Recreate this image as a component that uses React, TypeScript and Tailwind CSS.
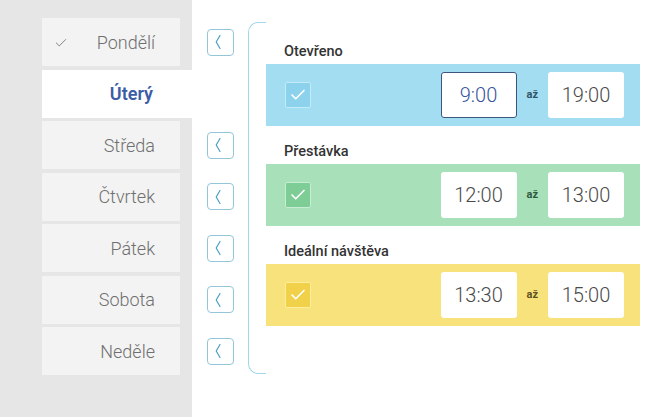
import { Check } from "lucide-react";

const days = [
  { name: "Pondělí", done: true },
  { name: "Úterý", active: true },
  { name: "Středa" },
  { name: "Čtvrtek" },
  { name: "Pátek" },
  { name: "Sobota" },
  { name: "Neděle" },
];

const sections = [
  {
    label: "Otevřeno",
    band: "bg-[#a3ddf1]",
    box: "bg-[#8dd2ec] border-[#c4ecf8]",
    az: "text-[#2f5566]",
    from: "9:00",
    to: "19:00",
    focused: true,
  },
  {
    label: "Přestávka",
    band: "bg-[#a7e0b9]",
    box: "bg-[#7ecc96] border-[#c6eed2]",
    az: "text-[#2f5a3d]",
    from: "12:00",
    to: "13:00",
  },
  {
    label: "Ideální návštěva",
    band: "bg-[#f7e27c]",
    box: "bg-[#f1d04a] border-[#fbee9f]",
    az: "text-[#5e5222]",
    from: "13:30",
    to: "15:00",
  },
];

function Chevron() {
  return (
    <svg width="8" height="16" viewBox="0 0 8 16" className="-ml-[5px]">
      <path d="M6 1.5 L2.2 8 L6 14.5" fill="none" stroke="#4a9fc2" strokeWidth="1.2" strokeLinecap="round" strokeLinejoin="round" />
    </svg>
  );
}

function TimeBox({ value, focused }: { value: string; focused?: boolean }) {
  return (
    <div
      className={
        "w-[76px] h-[46px] bg-white rounded-[3px] flex items-center justify-center text-[20px] font-light " +
        (focused ? "border border-[#3d5680] text-[#34549c]" : "text-[#4a4a4a]")
      }
    >
      {value}
    </div>
  );
}

export default function App() {
  return (
    <div
      className="w-[666px] h-[417px] flex bg-white overflow-hidden"
      style={{ fontFamily: "Roboto, 'Noto Sans', sans-serif" }}
    >
      {/* Day tabs */}
      <div className="w-[192px] shrink-0 bg-[#e6e6e6] pt-[18px] flex flex-col gap-[3.5px]">
        {days.map((d) =>
          d.active ? (
            <div
              key={d.name}
              className="h-[48px] ml-[42px] w-[150px] bg-white flex items-center justify-end pr-[39px] text-[18px] font-semibold text-[#3d5ca6]"
            >
              {d.name}
            </div>
          ) : (
            <div
              key={d.name}
              className="h-[48px] ml-[42px] w-[138px] bg-[#f3f3f3] flex items-center justify-end pr-[25px] relative text-[18px] font-light text-[#6f6f6f]"
            >
              {d.done && (
                <Check className="absolute left-[12px] top-[18px] text-[#7a7a7a]" size={14} strokeWidth={1.6} />
              )}
              {d.name}
            </div>
          )
        )}
      </div>

      {/* Copy buttons */}
      <div className="w-[56px] shrink-0 pt-[18px] pl-[15px] flex flex-col gap-[3.5px]">
        {days.map((d) => (
          <div key={d.name} className="h-[48px] flex items-center">
            {!d.active && (
              <div className="w-[27px] h-[27px] rounded-[4px] border-[1.5px] border-[#93c6d8] flex items-center justify-center">
                <Chevron />
              </div>
            )}
          </div>
        ))}
      </div>

      {/* Hours panel */}
      <div className="mt-[22px] h-[352px] flex">
        <div className="w-[18px] border-l-[1.5px] border-y-[1.5px] border-[#a3d6e8] rounded-l-[10px]" />
        <div className="w-[374px] pt-[21px] flex flex-col gap-[17px]">
          {sections.map((s) => (
            <div key={s.label}>
              <div className="h-[17px] leading-[17px] text-[14.5px] font-medium text-[#333] pl-[18px] mb-[4px]">
                {s.label}
              </div>
              <div className={"h-[62px] flex items-center pl-[19px] pr-[16px] " + s.band}>
                <div className={"w-[26px] h-[26px] border-[1.5px] rounded-[2px] flex items-center justify-center " + s.box}>
                  <Check className="text-white" size={18} strokeWidth={2.2} />
                </div>
                <div className="ml-auto flex items-center">
                  <TimeBox value={s.from} focused={s.focused} />
                  <span className={"mx-[10px] text-[11px] font-bold " + s.az}>až</span>
                  <TimeBox value={s.to} />
                </div>
              </div>
            </div>
          ))}
        </div>
      </div>
    </div>
  );
}
